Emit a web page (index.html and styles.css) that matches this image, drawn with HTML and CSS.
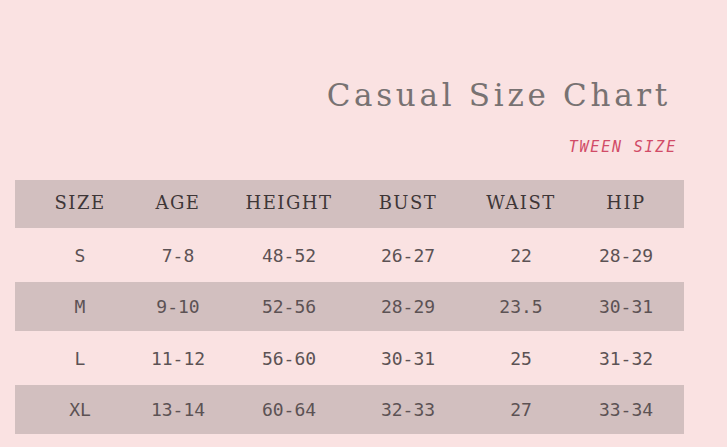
FILE: index.html
```html
<!DOCTYPE html>
<html>
<head>
<meta charset="utf-8">
<link rel="stylesheet" href="styles.css">
</head>
<body>
<div class="page">
  <h1 class="title">Casual Size Chart</h1>
  <div class="subtitle">TWEEN SIZE</div>
  <div class="chart">
    <div class="row head">
      <div>SIZE</div><div>AGE</div><div>HEIGHT</div><div>BUST</div><div>WAIST</div><div>HIP</div>
    </div>
    <div class="row light">
      <div>S</div><div>7-8</div><div>48-52</div><div>26-27</div><div>22</div><div>28-29</div>
    </div>
    <div class="row dark">
      <div>M</div><div>9-10</div><div>52-56</div><div>28-29</div><div>23.5</div><div>30-31</div>
    </div>
    <div class="row light">
      <div>L</div><div>11-12</div><div>56-60</div><div>30-31</div><div>25</div><div>31-32</div>
    </div>
    <div class="row dark">
      <div>XL</div><div>13-14</div><div>60-64</div><div>32-33</div><div>27</div><div>33-34</div>
    </div>
  </div>
</div>
</body>
</html>
```

FILE: styles.css
```css
html, body {
  margin: 0;
  padding: 0;
  background: #fae2e2;
}
.page {
  width: 727px;
  height: 447px;
  padding-top: 78px;
  box-sizing: border-box;
  display: flex;
  flex-direction: column;
}
.title {
  margin: 0;
  align-self: flex-end;
  margin-right: 56px;
  font-family: "DejaVu Serif", "Liberation Serif", serif;
  font-weight: normal;
  font-size: 31px;
  line-height: 34px;
  letter-spacing: 3.7px;
  color: #787272;
}
.subtitle {
  align-self: flex-end;
  margin-right: 50px;
  margin-top: 28px;
  font-family: "DejaVu Sans Mono", monospace;
  font-style: italic;
  font-size: 15px;
  line-height: 15px;
  letter-spacing: 1.8px;
  color: #d14b67;
}
.chart {
  margin: 25px 43px 0 15px;
  display: flex;
  flex-direction: column;
}
.row {
  display: grid;
  grid-template-columns: 100px 96px 126px 112px 114px 96px;
  padding-left: 15px;
  align-items: center;
  text-align: center;
  font-family: "DejaVu Sans Mono", monospace;
  font-size: 18px;
  color: #5c5254;
}
.head {
  height: 48px;
  background: #d2bfbf;
  font-family: "DejaVu Serif", "Liberation Serif", serif;
  font-size: 18px;
  letter-spacing: 1.5px;
  color: #3e3637;
  padding-bottom: 4px;
  box-sizing: border-box;
}
.light {
  height: 54px;
}
.dark {
  height: 49px;
  background: #d2bfbf;
}
```
